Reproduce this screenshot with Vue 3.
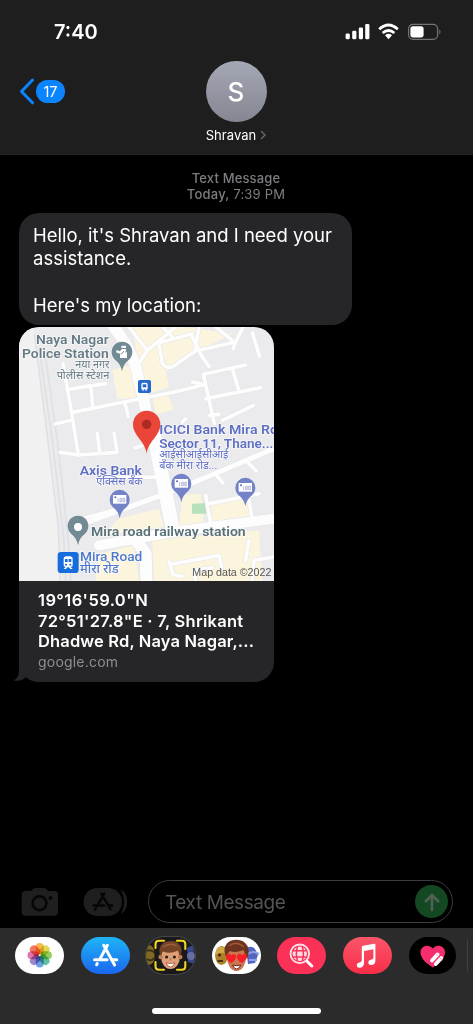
<script setup>
const railRoads = [
  'M60 60 L100 340 L135 640 L140 762',
  'M75 60 L115 340 L148 640 L155 762',
  'M46 20 L88 350 L118 600 L124 762',
]
const streets = [
  'M132 110 L160 270 L178 384 L294 376 L285 318',
  'M235 318 L242 378 M178 384 L124 376 M158 280 L108 291',
  'M145 188 L215 176 M215 176 L222 246 M160 256 L330 222 L480 192 L560 172 M318 228 L328 268',
  'M225 175 L260 170 M348 362 L375 355 M294 452 L420 450',
  'M330 0 L385 70 L350 125 M385 70 L470 0 M410 50 L520 20 M520 30 L550 90 L570 118',
  'M420 50 L430 110 Q450 135 480 105 L540 65 M430 0 L460 30 M540 0 L528 70',
  'M540 70 L650 45 L672 0 M650 45 L643 65 M700 18 L722 88 M590 0 L640 40',
  'M553 142 L680 114 M553 142 L586 290 M640 125 L660 192 M560 215 L725 182 M572 265 L600 262',
  'M610 280 L704 235 M490 285 L500 275 M545 170 L520 165',
  'M680 400 L712 432 M588 440 L612 468 M560 505 L575 590 M570 530 L720 500 M690 520 L700 580',
  'M450 705 L462 742 L490 748 M455 712 L600 685 L608 725 M530 762 L525 730 L580 722 M700 762 L705 700 L765 690 M690 640 L680 700',
  'M240 660 L370 635',
]
const mainRoads = [
  { d: 'M285 0 Q345 80 355 140 L400 330', w: 34 },
  { d: 'M400 300 L440 500 L462 610', w: 42 },
  { d: 'M200 588 L440 500 L600 435 L765 365', w: 15 },
  { d: 'M190 575 L300 545', w: 10 },
  { d: 'M240 655 L480 612 L765 575', w: 30 },
  { d: 'M352 640 L380 680 L382 762', w: 36 },
]
const bankPins = [
  { x: 302, y: 518 },
  { x: 487, y: 470 },
  { x: 679, y: 482 },
]
const petals = [
  ['#f6a623', 0], ['#d9d02b', 45], ['#7fc241', 90], ['#3fb58a', 135],
  ['#4a90d9', 180], ['#8f6bc0', 225], ['#d9569b', 270], ['#ef5a42', 315],
]
</script>

<template>
  <div class="screen">
    <header class="top">
      <div class="status">
        <span class="time">7:40</span>
        <svg class="indicators" width="97" height="18" viewBox="0 0 97 18">
          <g fill="#fff">
            <rect x="0.6" y="10.6" width="4.2" height="5.6" rx="1.1" />
            <rect x="7.2" y="7.8" width="4.2" height="8.4" rx="1.1" />
            <rect x="13.8" y="4.6" width="4.2" height="11.6" rx="1.1" />
            <rect x="20.2" y="1" width="4.2" height="15.2" rx="1.1" />
          </g>
          <g fill="none" stroke="#fff" stroke-width="2.7">
            <path d="M34.2 6.2 Q43.5 -2.2 52.8 6.2" />
            <path d="M37.6 10.1 Q43.5 4.9 49.4 10.1" />
          </g>
          <path d="M40 12.3 Q43.5 9.4 47 12.3 L43.5 16.2Z" fill="#fff" />
          <rect x="63.6" y="1.3" width="29" height="15" rx="4.4" fill="none" stroke="#747474" stroke-width="1.2" />
          <rect x="65.4" y="3.2" width="13.2" height="11.2" rx="2.6" fill="#fff" />
          <path d="M94.4 6.2 Q96.6 8.8 94.4 11.4Z" fill="#747474" />
        </svg>
      </div>
      <div class="nav">
        <div class="back">
          <svg width="16" height="27" viewBox="0 0 16 27">
            <path d="M13.5 2 L2.5 13.5 L13.5 24.8" fill="none" stroke="#0a84ff" stroke-width="3" stroke-linecap="round" stroke-linejoin="round" />
          </svg>
          <span class="count">17</span>
        </div>
        <div class="contact">
          <div class="avatar">S</div>
          <div class="name">
            <span>Shravan</span>
            <svg width="6" height="10" viewBox="0 0 6 10"><path d="M1 1 L5 5 L1 9" fill="none" stroke="#6b6b6e" stroke-width="1.3" /></svg>
          </div>
        </div>
      </div>
    </header>

    <main class="chat">
      <div class="stamp">
        <div class="kind">Text Message</div>
        <div class="when"><b>Today,</b> 7:39 PM</div>
      </div>
      <div class="bubble">Hello, it's Shravan and I need your<br>assistance.<br><br>Here's my location:</div>

      <div class="card">
        <svg class="map" viewBox="0 0 765 762" preserveAspectRatio="none">
          <rect width="765" height="762" fill="#ebebed" />
          <path d="M0 0 L45 0 L110 500 L130 762 L0 762Z" fill="#f2f1f1" />
          <g fill="#fcf5de">
            <path d="M340 0 L500 0 L640 20 L520 80 L440 135 L400 70 L360 120Z" />
            <path d="M280 130 L345 110 L360 215 L295 215Z" />
            <path d="M390 70 L430 80 L450 180 L390 200 L365 110Z" />
            <path d="M400 210 L445 200 L465 248 L410 262Z" />
            <path d="M490 505 L545 500 L555 590 L480 600Z" />
            <path d="M575 530 L690 510 L700 575 L580 590Z" />
            <path d="M300 575 L420 545 L435 600 L250 625Z" />
            <path d="M400 640 L720 610 L730 762 L405 762Z" />
            <path d="M240 680 L345 655 L360 762 L230 762Z" />
          </g>
          <path d="M519 530 L562 528 L564 560 L519 560Z" fill="#b7e1bd" />
          <path v-for="d in railRoads" :key="d" :d="d" fill="none" stroke="#dee1e4" stroke-width="5" />
          <g fill="none" stroke-linecap="round" stroke-linejoin="round">
            <path v-for="d in streets" :key="'e' + d" :d="d" stroke="#e2e3e6" stroke-width="14" />
            <path v-for="r in mainRoads" :key="'e' + r.d" :d="r.d" stroke="#e5e6e9" :stroke-width="r.w + 4" />
            <path v-for="d in streets" :key="d" :d="d" stroke="#fdfdfd" stroke-width="11" />
            <path v-for="r in mainRoads" :key="r.d" :d="r.d" stroke="#fdfdfd" :stroke-width="r.w" />
          </g>

          <g class="poi" fill="#667b85">
            <text x="51" y="52" textLength="218" lengthAdjust="spacingAndGlyphs" font-size="40">Naya Nagar</text>
            <text x="9" y="93" textLength="260" lengthAdjust="spacingAndGlyphs" font-size="40">Police Station</text>
            <text class="hi" x="169" y="123" textLength="102" lengthAdjust="spacingAndGlyphs" font-size="32">नया नगर</text>
            <text class="hi" x="113" y="156" textLength="158" lengthAdjust="spacingAndGlyphs" font-size="32">पोलीस स्टेशन</text>
            <text x="216" y="627" textLength="464" lengthAdjust="spacingAndGlyphs" font-size="39" fill="#587078">Mira road railway station</text>
          </g>
          <g class="poi" fill="#5f6fc3">
            <text x="421" y="321" textLength="356" lengthAdjust="spacingAndGlyphs" font-size="40">ICICI Bank Mira Ro</text>
            <text x="421" y="363" textLength="342" lengthAdjust="spacingAndGlyphs" font-size="40">Sector 11, Thane...</text>
            <text class="hi" x="421" y="394" textLength="207" lengthAdjust="spacingAndGlyphs" font-size="32">आईसीआईसीआई</text>
            <text class="hi" x="421" y="427" textLength="174" lengthAdjust="spacingAndGlyphs" font-size="32">बँक मीरा रोड...</text>
            <text x="182" y="443" textLength="187" lengthAdjust="spacingAndGlyphs" font-size="40">Axis Bank</text>
            <text class="hi" x="232" y="475" textLength="139" lengthAdjust="spacingAndGlyphs" font-size="32">ऍक्सिस बँक</text>
          </g>
          <g class="poi station" fill="#4e79cd">
            <text x="183" y="703" textLength="187" lengthAdjust="spacingAndGlyphs" font-size="41">Mira Road</text>
            <text class="hi strong" x="183" y="738" textLength="116" lengthAdjust="spacingAndGlyphs" font-size="37">मीरा रोड</text>
          </g>
          <text class="credit" x="520" y="748" textLength="237" lengthAdjust="spacingAndGlyphs" font-size="33">Map data ©2022</text>

          <g transform="translate(309 76)">
            <path d="M0 57 Q-4 34 -21 22 A31 31 0 1 1 21 22 Q4 34 0 57Z" fill="#718a94" />
            <path d="M-2 -20 H12 V-13 H-2Z M-1 -10 H11 L13 -4 L8 0 H15 V17 H-6 V4 L-18 0 L-16 -7 L-6 -3Z" fill="#fff" />
            <path d="M-4 6 L6 -3" stroke="#718a94" stroke-width="3" />
          </g>
          <g transform="translate(177 598)">
            <path d="M0 57 Q-4 34 -21 22 A31 31 0 1 1 21 22 Q4 34 0 57Z" fill="#718a94" />
            <circle r="12" cy="2" fill="#fff" />
          </g>
          <g v-for="p in bankPins" :key="p.x" :transform="`translate(${p.x} ${p.y})`">
            <path d="M0 56 Q-4 34 -21 22 A30 30 0 1 1 21 22 Q4 34 0 56Z" fill="#7482c8" />
            <rect x="-20" y="-14" width="40" height="26" fill="#fff" />
            <circle cx="-13" cy="-7" r="3" fill="#5868b8" />
            <path d="M-5 -4 v11 M1 -4 h5 v10 h-5z M10 -4 h5 v10 h-5z" fill="none" stroke="#9fa9d8" stroke-width="2.5" />
          </g>
          <g transform="translate(357 159)">
            <rect width="39" height="39" rx="5" fill="#2468d0" />
            <path d="M10 28 V13 Q10 8 15 8 H24 Q29 8 29 13 V28 H26 V32 H22 V28 H17 V32 H13 V28Z" fill="#fff" />
            <rect x="14" y="13" width="11" height="9" fill="#2468d0" />
          </g>
          <g transform="translate(116 675)">
            <rect width="63" height="63" rx="10" fill="#176ddd" />
            <path d="M18 40 V21 Q18 13 26 13 H37 Q45 13 45 21 V40 Q45 45 39 45 L45 51 H38 L34 46 H29 L25 51 H18 L24 45 Q18 45 18 40Z" fill="#fff" />
            <path d="M22 21 H30 V30 H22Z M33 21 H41 V30 H33Z" fill="#176ddd" />
            <circle cx="25" cy="38" r="3" fill="#176ddd" /><circle cx="38" cy="38" r="3" fill="#176ddd" />
          </g>
          <path d="M383 381 C379 342 342 328 342 292 A41 41 0 0 1 424 292 C424 328 387 342 383 381Z" fill="#e94538" />
          <circle cx="383" cy="292" r="14" fill="#ad2a22" />
        </svg>
        <div class="info">
          <div class="title"><span class="t1">19°16'59.0"N</span><br><span class="t2">72°51'27.8"E · 7, Shrikant</span><br><span class="t3">Dhadwe Rd, Naya Nagar,...</span></div>
          <div class="site">google.com</div>
        </div>
        <svg class="tail" width="22" height="24" viewBox="0 0 22 24">
          <path d="M6 0 V12 Q6 20 0.5 22.5 Q8 24 13 19 L22 23 V0Z" fill="#262629" />
        </svg>
      </div>
    </main>

    <div class="compose">
      <svg class="camera" width="38" height="30" viewBox="0 0 38 30">
        <path d="M4 4 H9 Q10.5 4 11.2 2.8 Q12.4 1 14 1 H23 Q24.8 1 26 2.8 Q26.8 4 28.2 4 H33.5 Q37 4 37 7.5 V25 Q37 28.7 33.5 28.7 H4 Q0.7 28.7 0.7 25 V7.5 Q0.7 4 4 4Z" fill="#1f1f20" />
        <circle cx="18.5" cy="16.2" r="7" fill="none" stroke="#050505" stroke-width="2.4" />
        <circle cx="29.5" cy="10.8" r="1.9" fill="#050505" />
      </svg>
      <svg class="store" width="46" height="30" viewBox="0 0 46 30">
        <path d="M37.5 2.5 Q44.2 6 44.2 14.8 Q44.2 23.8 37.5 27.4 Q41 22 41 15 Q41 8 37.5 2.5Z" fill="#1f1f20" />
        <rect x="0.5" y="1" width="38.5" height="28" rx="14" fill="#1f1f20" />
        <g stroke="#060606" stroke-width="2.5" stroke-linecap="round" fill="none">
          <path d="M21.3 6.5 L14 19.5 M18.3 6.5 L27.5 22.3 M10.5 18.5 H21 M25.8 18.5 H29 M12.6 21.8 L12 22.6" />
        </g>
      </svg>
      <div class="field">
        <span class="placeholder">Text Message</span>
        <div class="send">
          <svg width="32" height="32" viewBox="0 0 32 32"><path d="M16 24 V9.5 M9.8 15.2 L16 9 L22.2 15.2" fill="none" stroke="#506055" stroke-width="2.7" stroke-linecap="round" stroke-linejoin="round" /></svg>
        </div>
      </div>
    </div>

    <footer class="dock">
      <div class="apps">
        <div class="app white">
          <svg width="49" height="37" viewBox="0 0 49 37">
            <g class="petals">
              <rect v-for="[c, a] in petals" :key="a" x="20.7" y="6" width="8" height="11.4" rx="4" :fill="c" fill-opacity="0.82" :transform="`rotate(${a} 24.7 18.2)`" />
            </g>
          </svg>
        </div>
        <div class="app blue">
          <svg width="49" height="37" viewBox="0 0 49 37">
            <g fill="none" stroke="#fff" stroke-width="3" stroke-linecap="round">
              <path d="M26.4 8.3 L18.8 22.2 M22.7 8.3 L33.6 28" />
              <path d="M13.6 22.8 H26 M30.8 22.8 H35.8 M16.2 26.6 L15.6 27.7" />
            </g>
          </svg>
        </div>
        <div class="app memoji">
          <svg width="49" height="37" viewBox="0 0 49 37">
            <ellipse cx="3" cy="18" rx="6" ry="10" fill="#806a23" />
            <path d="M0 14 Q5 12 9 16 M1 22 Q5 25 8 21" stroke="#3b321b" stroke-width="2" fill="none" />
            <path d="M41 11 L47 8 L49 27 L42 25Z" fill="#37478e" /><circle cx="45" cy="19" r="4" fill="#686da2" />
            <rect x="8.5" y="2" width="32" height="33" fill="#19191b" />
            <ellipse cx="24.5" cy="20" rx="9.4" ry="12" fill="#dfa077" />
            <circle cx="14.7" cy="20" r="2.3" fill="#c28058" /><circle cx="34.2" cy="20" r="2.3" fill="#c28058" />
            <path d="M14 19 Q11.5 8 19 5 Q31 1.5 34.5 9 Q36.5 14 34.5 19 Q32.5 17 32 13.5 Q24 17.5 17 14.5Z" fill="#754326" />
            <path d="M17 10 Q24 5 31 9" stroke="#9a6340" stroke-width="1.4" fill="none" />
            <circle cx="20.6" cy="20" r="1.6" fill="#2d201b" /><circle cx="28.4" cy="20" r="1.6" fill="#2d201b" />
            <path d="M24.5 21 V23.5" stroke="#b97850" stroke-width="1.5" />
            <path d="M20.2 25.8 Q24.5 27.4 28.8 25.8 Q27.5 30 24.5 30 Q21.5 30 20.2 25.8Z" fill="#fff" stroke="#a34e3c" stroke-width="0.8" />
            <path d="M9.5 11 V7 Q9.5 3.7 13 3.7 H18 M31 3.7 H36 Q39.3 3.7 39.3 7 V12 M9.5 25 V29 Q9.5 32.8 13 32.8 H18 M31 32.8 H36 Q39.3 32.8 39.3 29 V25" fill="none" stroke="#f2d51f" stroke-width="2.1" stroke-linecap="round" />
          </svg>
        </div>
        <div class="app white">
          <svg width="49" height="37" viewBox="0 0 49 37">
            <path d="M34 11 Q40 8 43 12 L46 18 L43 26 L36 27Z" fill="#5365bf" />
            <path d="M36 17 Q41 13 47 17 M37 23 H45" stroke="#8fa0e5" stroke-width="2.2" fill="none" />
            <ellipse cx="9.5" cy="18.5" rx="6.4" ry="9.6" fill="#ad8126" />
            <path d="M4 14 Q9 6 14 13 L14 17 Q8 14 4 18Z" fill="#d0aa48" />
            <circle cx="7.5" cy="18" r="1.5" fill="#36240e" /><path d="M5.5 24 H11" stroke="#4c3210" stroke-width="2" />
            <ellipse cx="24.5" cy="20" rx="9.6" ry="14" fill="#cb7551" />
            <path d="M13.5 19 Q10 8 18 4 Q30 0 35.5 9 Q37.5 14 35.5 21 Q32.5 17 31.5 13 Q23 16.5 18 14Z" fill="#6c3420" />
            <path d="M17 9 Q24 3 32 10" stroke="#9c5838" stroke-width="1.5" fill="none" />
            <path d="M19.5 26 C15 24 12.5 20 14.7 17.5 C17 15.5 19.5 17.5 19.5 19 C20 16.5 24 16.5 24.3 19.5 C24 23 21.5 24 19.5 26Z M29.8 26 C25.5 24 24 20 25.7 17.8 C28 15.6 30 17.5 30 19 C31 16 35 16 35.2 19.5 C35 23 31.6 24 29.8 26Z" fill="#f61f27" />
            <path d="M20.5 28 Q25 29.5 29 28 Q27 32 24.5 32 Q22 32 20.5 28Z" fill="#fff" stroke="#71261d" />
          </svg>
        </div>
        <div class="app pink">
          <svg width="49" height="37" viewBox="0 0 49 37">
            <g fill="none" stroke="#ffe3e9">
              <circle cx="22.8" cy="16.8" r="9.3" stroke-width="1.8" />
              <circle cx="22.8" cy="16.8" r="7.2" fill="#ffdce4" stroke="none" />
              <path d="M15.5 13.7 H30 M15.5 19.9 H30 M20.5 9.5 Q18.2 16.8 20.5 24 M25.3 9.5 Q27.5 16.8 25.3 24" stroke="#fb3158" stroke-width="1.5" />
              <path d="M30 24.2 L34.8 29" stroke="#fff" stroke-width="3" stroke-linecap="round" />
            </g>
          </svg>
        </div>
        <div class="app music">
          <svg width="49" height="37" viewBox="0 0 49 37">
            <path d="M18.8 10.2 Q18.8 9 20 8.7 L31.2 6.8 Q32.4 6.6 32.4 7.8 V23.4 Q32.4 27.5 28.3 28 Q25.3 28.2 25.3 25.6 Q25.3 23 28.5 22.5 Q30.4 22.2 30.4 20.8 V12.3 L21 14 V26 Q21 30.2 17 30.7 Q13.8 31 13.8 28.2 Q13.8 25.7 17 25.2 Q18.8 24.9 18.8 23.5Z" fill="#fff" />
          </svg>
        </div>
        <div class="app black">
          <svg width="49" height="37" viewBox="0 0 49 37">
            <path d="M23.8 30.5 C18.5 27 11.5 22 11.5 15.5 C11.5 9 19.5 6.5 23.8 11.5 C28 6.5 36 9 36 15.5 C36 22 29.1 27 23.8 30.5Z" fill="#f62e6d" />
            <g stroke="#fff" stroke-width="3.8" stroke-linecap="round">
              <path d="M23 23.5 L28.6 17.4" /><path d="M26.8 27 L32.3 21" />
            </g>
            <path d="M26.5 16.5 L29.9 19.4 M30 20 L33.4 23" stroke="#f99ab9" stroke-width="0.9" />
          </svg>
        </div>
        <div class="edge"></div>
      </div>
      <div class="home"></div>
    </footer>
  </div>
</template>

<style>
html, body { margin: 0; background: #000; }
</style>

<style scoped>
.screen {
  width: 473px; height: 1024px; display: flex; flex-direction: column; overflow: hidden;
  background: #000; color: #fff; font-family: Inter, "Liberation Sans", sans-serif;
}
.top { height: 155px; flex: none; background: #1e1e1e; box-sizing: border-box; border-bottom: 1px solid #262626; }
.status { height: 61px; display: flex; justify-content: space-between; align-items: flex-start; padding: 22px 31px 0 54px; box-sizing: border-box; }
.time { font-size: 20px; line-height: 20px; font-weight: 600; letter-spacing: 0; }
.indicators { margin-top: 1px; }
.nav { display: grid; grid-template-columns: 1fr auto 1fr; }
.back { display: flex; align-items: center; gap: 1px; height: 61px; padding-left: 19px; }
.count { width: 29px; height: 23px; border-radius: 12px; background: #0a84ff; font-size: 14.5px; line-height: 23px; text-align: center; }
.contact { display: flex; flex-direction: column; align-items: center; margin-left: -1px; }
.avatar { width: 61px; height: 61px; border-radius: 50%; background: linear-gradient(#a5a8b5, #848691); font-size: 26px; line-height: 62px; text-align: center; font-weight: 500; }
.name { display: flex; align-items: center; gap: 4px; font-size: 13px; line-height: 18px; margin-top: 4px; letter-spacing: 0.05px; }
.chat { flex: 1; padding: 15px 0 0 19px; }
.stamp { margin-left: -20px; text-align: center; color: #7e7e82; font-size: 13px; line-height: 16px; height: 43px; }
.kind { font-weight: 500; letter-spacing: 0.15px; }
.when { letter-spacing: 0.2px; }
.when b { font-weight: 500; }
.bubble { width: 333px; height: 112px; border-radius: 20px; background: #262629; box-sizing: border-box; padding: 11px 0 0 14px; font-size: 18.5px; line-height: 23.2px; white-space: nowrap; }
.card { position: relative; width: 255px; margin-top: 2px; height: 355px; background: #262629; border-radius: 20px; }
.map { display: block; width: 255px; height: 254px; border-radius: 20px 20px 0 0; }
.poi { font-family: Roboto, "Noto Sans", sans-serif; font-weight: 600; paint-order: stroke; stroke: #fff; stroke-width: 4px; stroke-opacity: 0.7; }
.hi { font-weight: 400; }
.station { font-weight: 500; }
.strong { font-weight: 500; }
.credit { font-family: "Liberation Sans", Arial, sans-serif; fill: #555; }
.info { padding: 9px 0 0 19px; white-space: nowrap; }
.title { font-size: 16.5px; line-height: 20.6px; font-weight: 600; }
.t1 { letter-spacing: 0.4px; }
.t2 { letter-spacing: 0.26px; }
.t3 { letter-spacing: 0.14px; }
.site { font-size: 14px; line-height: 20px; color: #8d8d92; letter-spacing: 0.2px; }
.tail { position: absolute; left: -6px; bottom: 0; }
.compose { height: 53px; flex: none; display: flex; align-items: flex-start; box-sizing: border-box; padding: 5px 20px 0 21px; }
.camera { margin-top: 7px; }
.store { margin: 7px 0 0 24px; }
.field { margin-left: 19px; width: 305px; height: 43px; box-sizing: border-box; border: 1.5px solid #3d3d3f; border-radius: 22px; display: flex; align-items: center; justify-content: space-between; padding: 0 4px 0 16px; font-size: 19px; color: #545457; flex: none; }
.placeholder { letter-spacing: -0.42px; padding-top: 2px; }
.send { width: 33px; height: 33px; border-radius: 50%; background: #134822; display: grid; place-items: center; }
.dock { height: 96px; flex: none; background: #2b2b2b; }
.apps { display: flex; padding: 9px 0 0 15px; gap: 16.6px; height: 71px; box-sizing: border-box; }
.app { width: 49px; height: 37px; flex: none; border-radius: 19px; overflow: hidden; box-sizing: border-box; }
.app svg { display: block; }
.petals { isolation: isolate; }
.petals rect { mix-blend-mode: multiply; }
.white { background: #fff; }
.blue { background: linear-gradient(#1eb5f5, #1b66ef); }
.memoji { background: #19191b; box-shadow: 0 0 0 1px #454547; }
.pink { background: #fb3158; }
.music { background: linear-gradient(#f9566a, #f92e48); }
.black { background: #000; width: 47px; }
.edge { width: 1px; height: 32px; margin: 2px 0 0 -5px; flex: none; background: #404042; }
.home { width: 169px; height: 6px; border-radius: 3px; background: #fff; margin: 9px auto 0; }
</style>
